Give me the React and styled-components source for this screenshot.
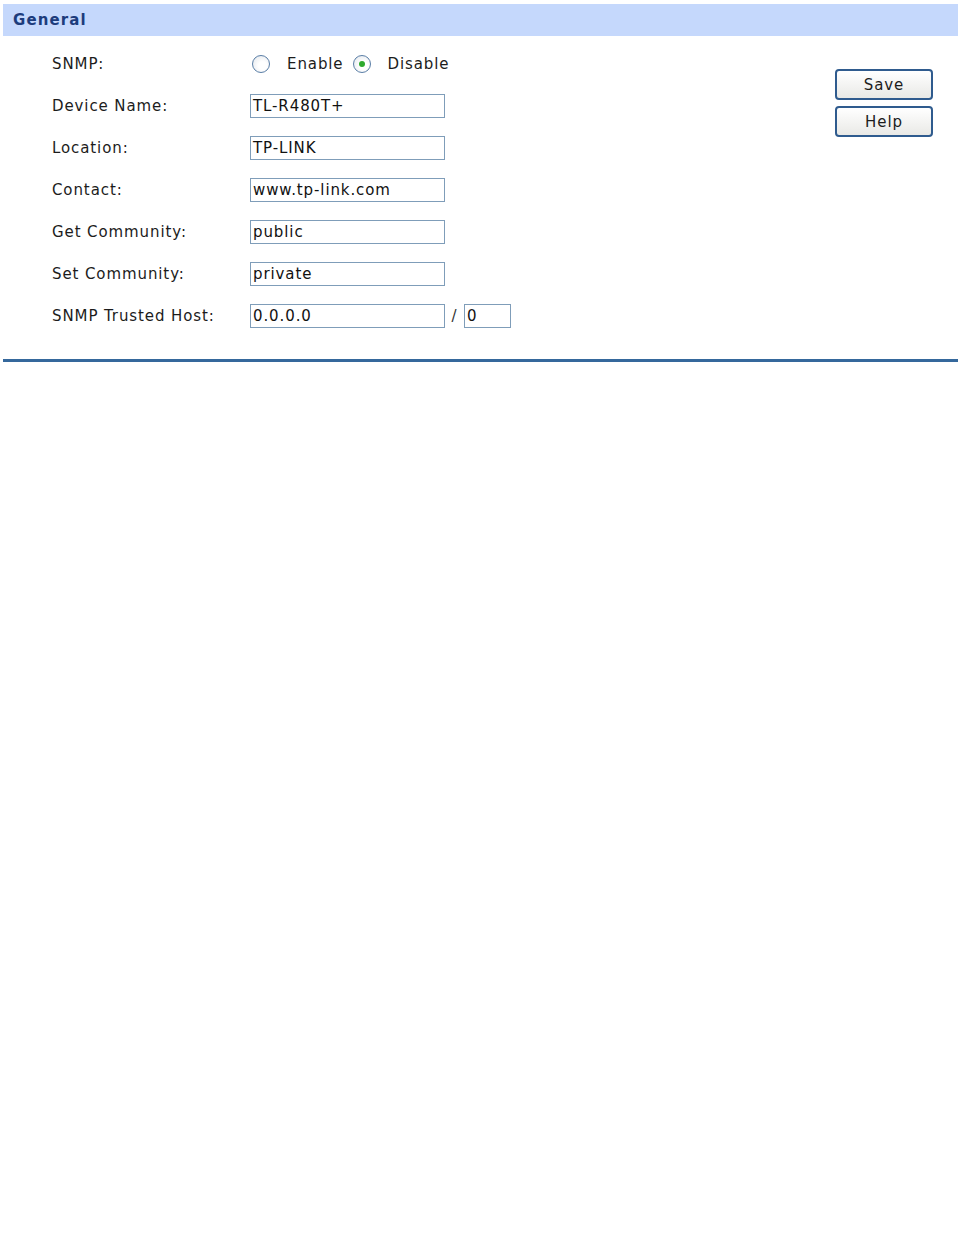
import React from 'react'
import styled, { createGlobalStyle } from 'styled-components'

const GlobalStyle = createGlobalStyle`
  html, body {
    margin: 0;
    padding: 0;
    background: #ffffff;
  }
  body {
    font-family: "DejaVu Sans", Verdana, sans-serif;
    color: #1c1c1c;
  }
`

const Page = styled.div`
  width: 964px;
  height: 1237px;
  padding: 4px 6px 0 3px;
  box-sizing: border-box;
`

const Header = styled.div`
  height: 32px;
  background: #c5d8fc;
  display: flex;
  align-items: center;
  padding-left: 10px;
  font-size: 15px;
  font-weight: bold;
  letter-spacing: 1.1px;
  color: #1d3c7c;
`

const Body = styled.div`
  display: flex;
  justify-content: space-between;
  padding: 16px 25px 0 49px;
  height: 326px;
  border-bottom: 3px solid #35689c;
  box-sizing: border-box;
`

const Form = styled.div`
  display: flex;
  flex-direction: column;
  gap: 18px;
`

const Row = styled.div`
  display: flex;
  align-items: center;
  height: 24px;
  font-size: 15px;
  letter-spacing: 0.9px;
`

const Label = styled.span`
  width: 198px;
`

const TextInput = styled.div`
  width: ${p => p.$w || 195}px;
  height: 24px;
  border: 1px solid #7f9db9;
  box-sizing: border-box;
  display: flex;
  align-items: center;
  padding-left: 2px;
  font-size: 15px;
  letter-spacing: 0.9px;
  color: #111;
`

const Slash = styled.span`
  width: 19px;
  text-align: center;
  color: #333;
`

const Radio = styled.span`
  width: 18px;
  height: 18px;
  border-radius: 50%;
  border: 1px solid #5a7ea6;
  box-sizing: border-box;
  background: radial-gradient(circle at 60% 60%, #ffffff 30%, #dfe4ea 100%);
  display: inline-flex;
  align-items: center;
  justify-content: center;
  margin: 0 17px 0 2px;
  &::after {
    content: '';
    width: 6px;
    height: 6px;
    border-radius: 50%;
    background: ${p => (p.$checked ? '#2eaa2e' : 'transparent')};
  }
`

const RadioText = styled.span`
  margin-right: 7px;
`

const Buttons = styled.div`
  display: flex;
  flex-direction: column;
  gap: 6px;
  padding-top: 17px;
`

const Button = styled.div`
  width: 98px;
  height: 31px;
  box-sizing: border-box;
  border: 2px solid #2f5b8e;
  border-radius: 4px;
  background: linear-gradient(#ffffff, #e9e9e6);
  display: flex;
  align-items: center;
  justify-content: center;
  font-size: 15px;
  letter-spacing: 0.9px;
  color: #1c1c1c;
`

const fields = [
  ['Device Name:', 'TL-R480T+'],
  ['Location:', 'TP-LINK'],
  ['Contact:', 'www.tp-link.com'],
  ['Get Community:', 'public'],
  ['Set Community:', 'private'],
]

const App = () => {
  return (
    <Page>
      <GlobalStyle />
      <Header>General</Header>
      <Body>
        <Form>
          <Row>
            <Label>SNMP:</Label>
            <Radio />
            <RadioText>Enable</RadioText>
            <Radio $checked />
            <RadioText>Disable</RadioText>
          </Row>
          {fields.map(([label, value]) => (
            <Row key={label}>
              <Label>{label}</Label>
              <TextInput>{value}</TextInput>
            </Row>
          ))}
          <Row>
            <Label>SNMP Trusted Host:</Label>
            <TextInput>0.0.0.0</TextInput>
            <Slash>/</Slash>
            <TextInput $w={47}>0</TextInput>
          </Row>
        </Form>
        <Buttons>
          <Button>Save</Button>
          <Button>Help</Button>
        </Buttons>
      </Body>
    </Page>
  )
}

export default App
